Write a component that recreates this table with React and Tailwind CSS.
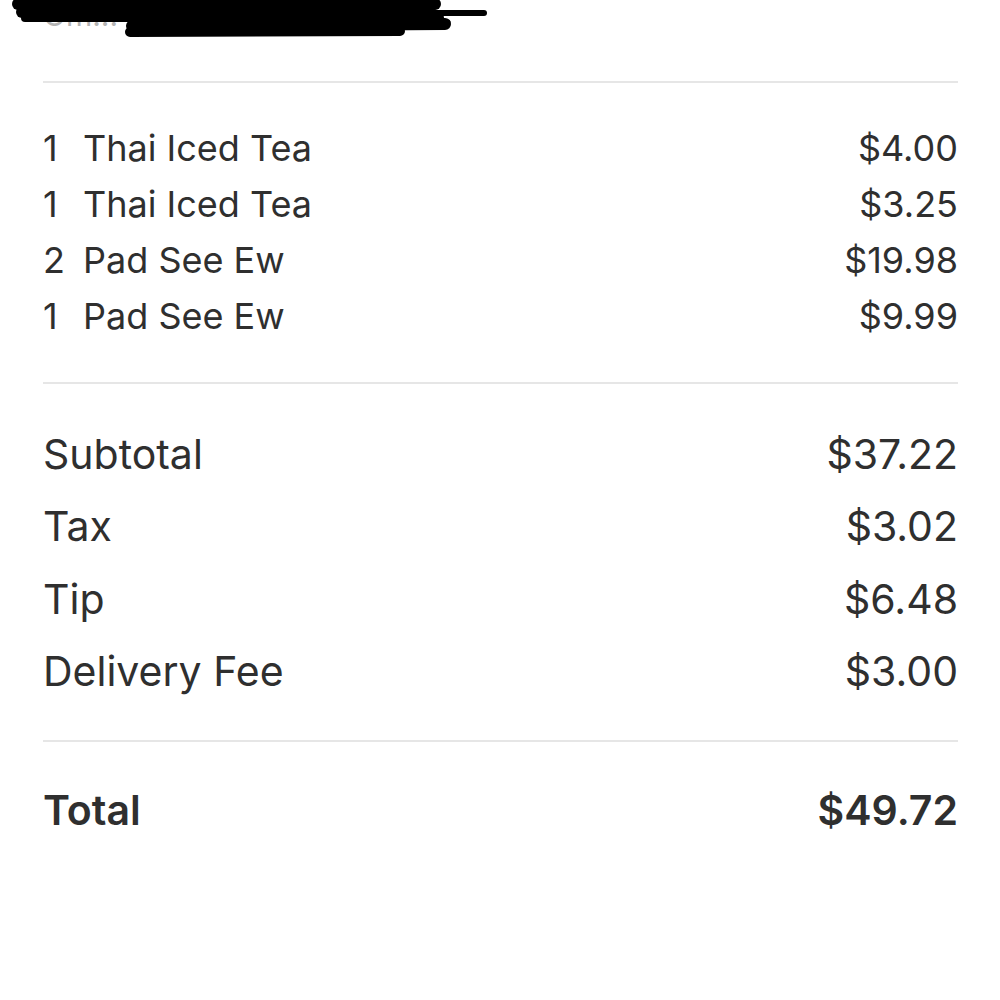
import React from "react";

const items = [
  ["1", "Thai Iced Tea", "$4.00"],
  ["1", "Thai Iced Tea", "$3.25"],
  ["2", "Pad See Ew", "$19.98"],
  ["1", "Pad See Ew", "$9.99"],
];

const summary = [
  ["Subtotal", "$37.22"],
  ["Tax", "$3.02"],
  ["Tip", "$6.48"],
  ["Delivery Fee", "$3.00"],
];

export default function App() {
  return (
    <div
      className="w-[1000px] h-[1000px] bg-white text-[#2f2f2f] overflow-hidden"
      style={{ fontFamily: "Inter, Roboto, 'Noto Sans', sans-serif" }}
    >
      <div className="pl-[43px] pr-[42px]">
        <div className="relative h-[81px] flow-root">
          <div className="text-[30px] text-[#b4b4b4] leading-none">Om...</div>
          <svg
            className="absolute top-0 left-[-43px]"
            width="520"
            height="45"
            viewBox="0 0 520 45"
          >
            <g stroke="#000" strokeLinecap="round" fill="none">
              <path d="M18 4 L435 4" strokeWidth="12" />
              <path d="M22 12 L430 12" strokeWidth="12" />
              <path d="M300 13 L484 13" strokeWidth="6" />
              <path d="M25 18 L440 18" strokeWidth="8" />
              <path d="M132 26 L445 24" strokeWidth="12" />
              <path d="M130 32 L400 31" strokeWidth="10" />
              <path d="M400 22 L448 22" strokeWidth="5" />
            </g>
          </svg>
        </div>
        <div className="h-[2px] bg-[#e6e6e6]" />
        <div className="pt-[37px] pb-[38px]">
          {items.map(([q, name, price], i) => (
            <div key={i} className="h-[56px] flex items-center justify-between text-[36px]">
              <div className="flex">
                <span className="w-[40px]">{q}</span>
                <span>{name}</span>
              </div>
              <span>{price}</span>
            </div>
          ))}
        </div>
        <div className="h-[2px] bg-[#e6e6e6]" />
        <div className="pt-[34px] pb-[32px]">
          {summary.map(([label, val], i) => (
            <div key={i} className="h-[72.5px] flex items-center justify-between text-[41px]">
              <span>{label}</span>
              <span>{val}</span>
            </div>
          ))}
        </div>
        <div className="h-[2px] bg-[#e6e6e6]" />
        <div className="h-[138px] flex items-center justify-between text-[41px] font-semibold">
          <span>Total</span>
          <span>$49.72</span>
        </div>
      </div>
    </div>
  );
}
